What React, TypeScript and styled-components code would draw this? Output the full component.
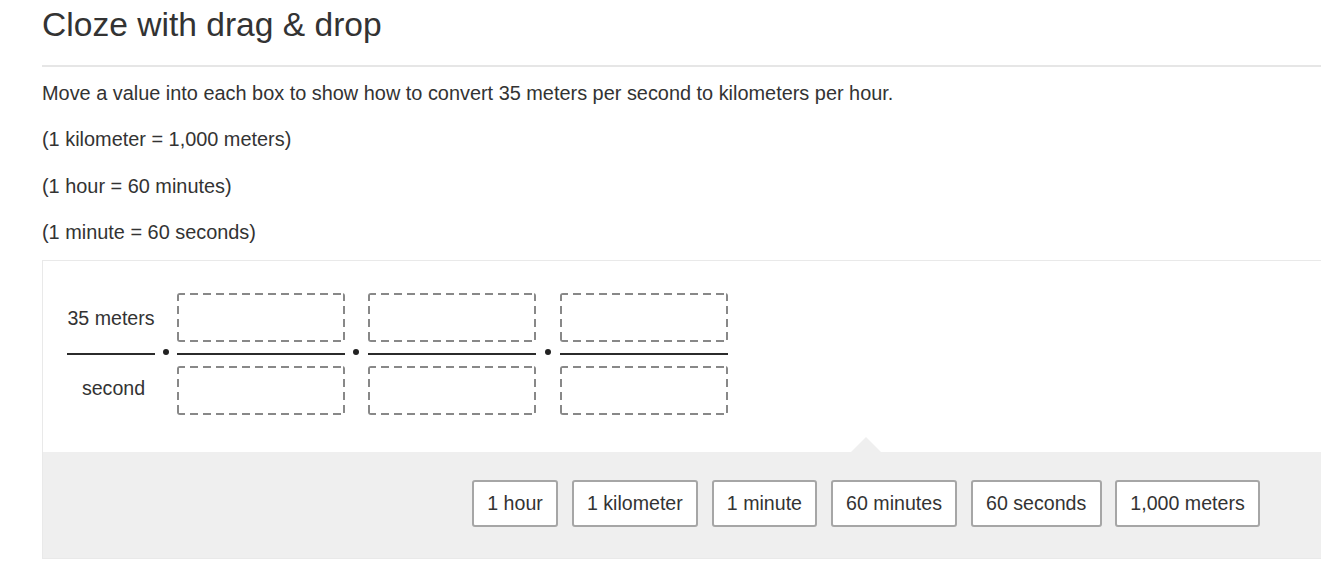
import React from 'react';
import styled, { createGlobalStyle } from 'styled-components';

const GlobalStyle = createGlobalStyle`
  html, body {
    margin: 0;
    padding: 0;
    background: #fff;
    overflow: hidden;
  }
  body {
    font-family: "Liberation Sans", Arial, Helvetica, sans-serif;
    color: #333;
  }
`;

const CHOICES = ['1 hour', '1 kilometer', '1 minute', '60 minutes', '60 seconds', '1,000 meters'];

const App = () => {
  return (
    <>
      <GlobalStyle />
      <Page>
        <Title>Cloze with drag &amp; drop</Title>
        <Rule />
        <Prompt>Move a value into each box to show how to convert 35 meters per second to kilometers per hour.</Prompt>
        <Prompt>(1 kilometer = 1,000 meters)</Prompt>
        <Prompt>(1 hour = 60 minutes)</Prompt>
        <Prompt>(1 minute = 60 seconds)</Prompt>

        <Panel>
          <Workspace>
            <Fraction $width={88}>
              <Cell $pad="3px 0 0 0">35 meters</Cell>
              <Bar />
              <Cell $pad="0 0 4px 5px">second</Cell>
            </Fraction>
            {[22, 23, 24].map((w, i) => (
              <React.Fragment key={i}>
                <Times $width={w}>
                  <Dot />
                </Times>
                <Fraction $width={168}>
                  <DropBox />
                  <Bar />
                  <DropBox />
                </Fraction>
              </React.Fragment>
            ))}
          </Workspace>
          <Tray>
            {CHOICES.map((c) => (
              <Choice key={c}>{c}</Choice>
            ))}
          </Tray>
        </Panel>
      </Page>
    </>
  );
};

export default App;

const Page = styled.div`
  width: 1648px;
  padding: 5px 0 0 42px;
`;

const Title = styled.h1`
  margin: 0;
  font-size: 33.6px;
  line-height: 40px;
  font-weight: 400;
  color: #333;
`;

const Rule = styled.div`
  margin-top: 20px;
  height: 2px;
  background: #e6e6e6;
`;

const Prompt = styled.p`
  margin: 11.5px 0 18.5px;
  font-size: 19.9px;
  line-height: 28px;
  & + & {
    margin-top: 0;
  }
`;

const Panel = styled.div`
  margin-top: -5px;
  border: 1px solid #e9e9e9;
  background: #fff;
`;

const Workspace = styled.div`
  display: flex;
  align-items: stretch;
  padding: 32px 0 37px 24px;
`;

const Fraction = styled.div<{ $width: number }>`
  width: ${(p) => p.$width}px;
  display: flex;
  flex-direction: column;
`;

const Cell = styled.div<{ $pad: string }>`
  height: 49px;
  box-sizing: border-box;
  display: flex;
  align-items: center;
  justify-content: center;
  padding: ${(p) => p.$pad};
  font-size: 19.6px;
  color: #333;
`;

const dash = '#888888';

const DropBox = styled.div`
  height: 49px;
  border-radius: 3px;
  background:
    repeating-linear-gradient(90deg, ${dash} 0 8px, transparent 8px 13px) top left / 100% 2px no-repeat,
    repeating-linear-gradient(90deg, ${dash} 0 8px, transparent 8px 13px) bottom left / 100% 2px no-repeat,
    repeating-linear-gradient(180deg, ${dash} 0 8px, transparent 8px 13px) top left / 2px 100% no-repeat,
    repeating-linear-gradient(180deg, ${dash} 0 8px, transparent 8px 13px) top right / 2px 100% no-repeat;
`;

const Bar = styled.div`
  height: 2px;
  background: #2b2b2b;
  margin: 11px 0 11px;
`;

const Times = styled.div<{ $width: number }>`
  width: ${(p) => p.$width}px;
  display: flex;
  align-items: center;
  justify-content: center;
`;

const Dot = styled.span`
  width: 6px;
  height: 6px;
  border-radius: 50%;
  background: #222;
  margin: 0 1px 4px 0;
`;

const Tray = styled.div`
  position: relative;
  display: flex;
  justify-content: center;
  gap: 13.5px;
  padding: 28px 0 31px;
  background: #efefef;

  &::before {
    content: '';
    position: absolute;
    left: calc(50% - 15px);
    top: -15px;
    border-left: 15px solid transparent;
    border-right: 15px solid transparent;
    border-bottom: 15px solid #efefef;
  }
`;

const Choice = styled.div`
  box-sizing: border-box;
  height: 47px;
  display: flex;
  align-items: center;
  padding: 0 13.3px;
  border: 2px solid #a6a6a6;
  border-radius: 3px;
  background: #fff;
  font-size: 19.6px;
  color: #333;
  white-space: nowrap;
`;
